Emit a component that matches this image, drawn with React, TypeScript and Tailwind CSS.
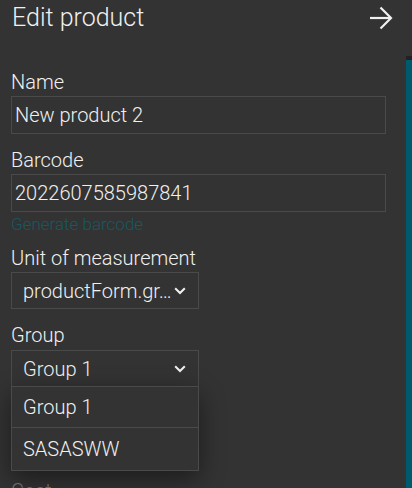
import React from "react";

const ChevronDown = () => (
  <svg width="14" height="14" viewBox="0 0 24 24" fill="none" stroke="currentColor" strokeWidth="3.5" strokeLinecap="square">
    <path d="M5 8.5l7 7 7-7" />
  </svg>
);

const ArrowForward = () => (
  <svg width="24" height="24" viewBox="0 0 24 24" fill="none" stroke="currentColor" strokeWidth="2.2">
    <path d="M1 12h21" />
    <path d="M11.5 1.5L22 12 11.5 22.5" />
  </svg>
);

const Label = ({ children }: { children: React.ReactNode }) => (
  <div className="text-[20px] font-light leading-[24px] text-[#f0f0f0]">{children}</div>
);

export default function App() {
  return (
    <div className="relative h-[488px] w-[412px] overflow-hidden bg-[#333333] font-['Roboto',sans-serif] font-light text-[#f0f0f0]">
      <div className="flex h-[36px] items-center justify-between pl-3 pr-[19px]">
        <div className="text-[25px] leading-[28px]">Edit product</div>
        <ArrowForward />
      </div>

      <div className="flex">
        <div className="flex-1 pl-[11px] pr-[20px] pt-[34px]">
          <Label>Name</Label>
          <div className="mt-[2px] flex h-[38px] items-center border border-[#4a4a4a] px-[3px] text-[20px]">
            New product 2
          </div>

          <div className="mt-[14px]">
            <Label>Barcode</Label>
          </div>
          <div className="mt-[2px] flex h-[38px] items-center border border-[#4a4a4a] px-[3px] text-[20px]">
            2022607585987841
          </div>
          <div className="mt-[2px] text-[17px] leading-[20px] text-[#145a62]">Generate barcode</div>

          <div className="mt-[12px]">
            <Label>Unit of measurement</Label>
          </div>
          <div className="mt-[2px] flex h-[37px] w-[188px] items-center justify-between border border-[#4a4a4a] pl-[11px] pr-[11px] text-[20px]">
            <span className="overflow-hidden whitespace-nowrap">productForm.gr…</span>
            <ChevronDown />
          </div>

          <div className="mt-[14px]">
            <Label>Group</Label>
          </div>
          <div className="relative mt-[3px] w-[188px]">
            <div className="flex h-[37px] items-center justify-between border border-[#4a4a4a] pl-[11px] pr-[11px] text-[20px]">
              <span>Group 1</span>
              <ChevronDown />
            </div>
            <div className="absolute left-0 top-[36px] z-10 w-[188px] border border-[#4a4a4a] bg-[#333333] shadow-[0_8px_24px_rgba(0,0,0,0.45)]">
              <div className="flex h-[41px] items-center border-b border-[#4a4a4a] pl-[11px] text-[20px]">Group 1</div>
              <div className="flex h-[42px] items-center pl-[11px] text-[20px]">SASASWW</div>
            </div>
          </div>

          <div className="mt-[92px] text-[20px] leading-[24px] text-[#7a7a7a]">Cost</div>
        </div>
        <div className="mt-[20px] flex w-[6px] flex-col">
          <div className="h-[4px] bg-[#222]" />
          <div className="h-[500px] bg-[#005a6e]" />
        </div>
      </div>
    </div>
  );
}
